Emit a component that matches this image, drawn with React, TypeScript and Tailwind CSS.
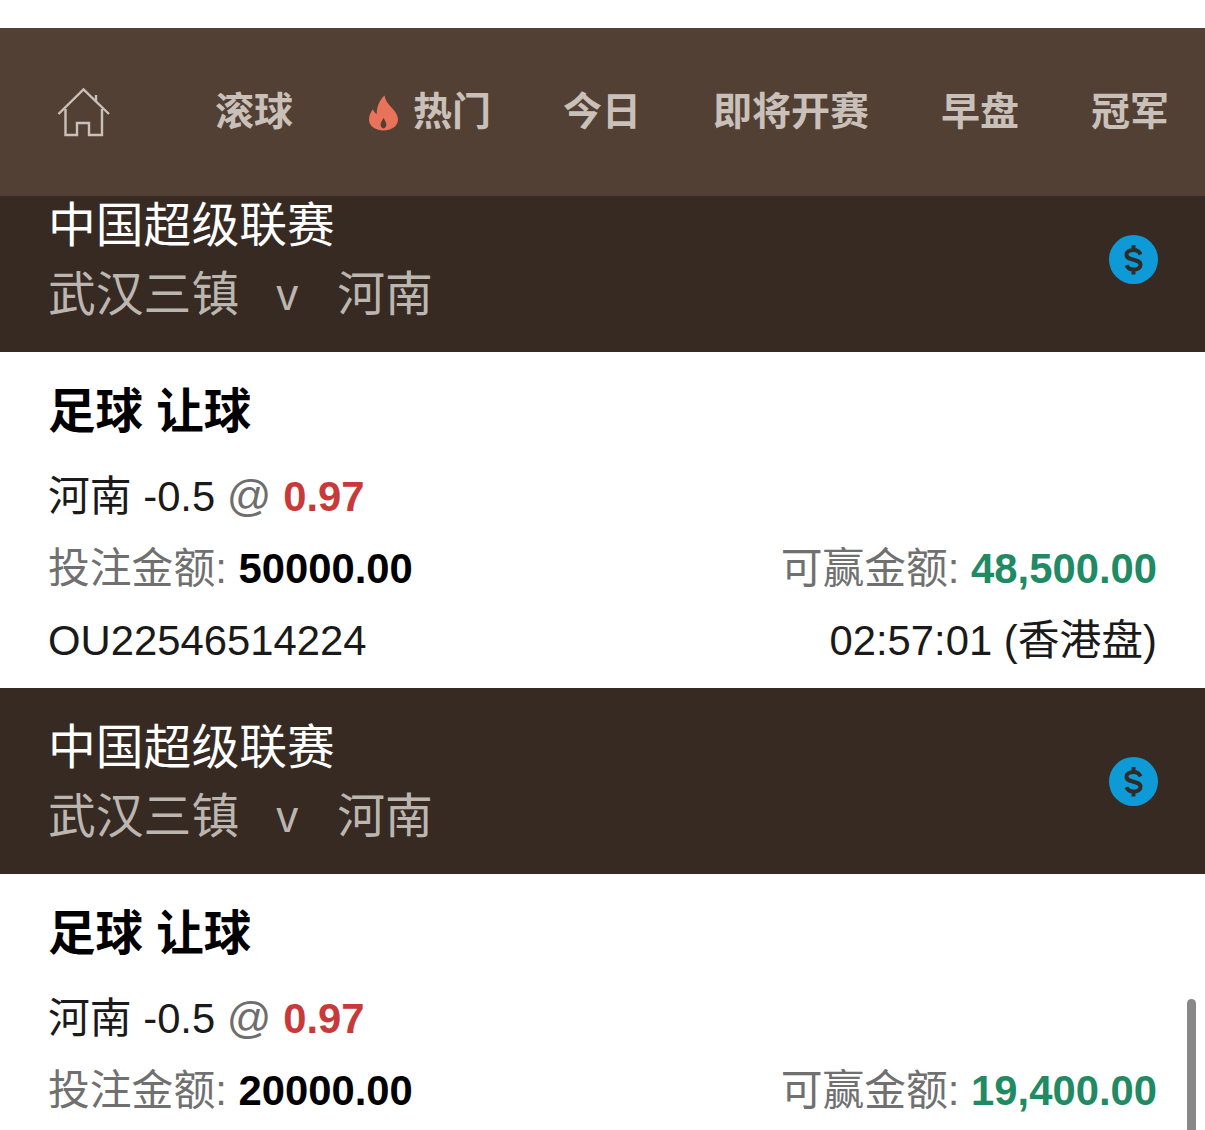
import { Fragment } from 'react'

const FONT = 'font-["Liberation_Sans","Noto_Sans_CJK_SC",sans-serif]'

const bets: { stake: string; win: string; ticket?: string; time?: string }[] = [
  { stake: '50000.00', win: '48,500.00', ticket: 'OU22546514224', time: '02:57:01 (香港盘)' },
  { stake: '20000.00', win: '19,400.00' },
]

function HomeIcon() {
  return (
    <svg width="54" height="50" viewBox="0 0 54 50" fill="none" stroke="#c9c1b9" strokeWidth="2.4" className="shrink-0">
      <path d="M1.5 27 26.5 2.500 52 27" />
      <path d="M39 15V8" />
      <path d="M8.5 22V48H20V36H32V48H45V22" />
    </svg>
  )
}

function FlameIcon() {
  return (
    <svg width="29" height="36" viewBox="0 0 30 36" className="shrink-0">
      <path
        fill="#e8735a"
        fillRule="evenodd"
        d="M16 0c1 5 3 8 7 12 4 4 7 8 7 13 0 6-6 11-15 11S0 31 0 25c0-5 2-8 4-11 1 2 2 4 4 5C8 11 11 5 16 0Zm-1 23c-1 3-3 4-3 7 0 2 1.500 4 3 4s3-2 3-4c0-3-2-4-3-7Z"
      />
    </svg>
  )
}

function DollarBadge() {
  return (
    <svg width="49" height="49" viewBox="0 0 49 49" className="shrink-0">
      <circle cx="24.5" cy="24.5" r="24.5" fill="#0e9ad6" />
      <path
        d="M31.5 19.500c-1-2.500-3.500-4.500-7-4.500-4 0-7 1.800-7 4.800 0 6.500 14 3.400 14 9.900 0 3-3 4.800-7 4.800s-6-1.800-7-4.300M24.500 10v5M24.500 34.500v5"
        fill="none"
        stroke="#2f2c28"
        strokeWidth="4"
      />
    </svg>
  )
}

function NavBar() {
  return (
    <nav className="flex h-[168px] items-center gap-[72px] bg-[#524034] pl-[57px] text-[39px] font-bold text-[#c9c1b9]">
      <div className="mr-[32px] flex">
        <HomeIcon />
      </div>
      <span>滚球</span>
      <span className="flex items-center gap-[15px]">
        <span className="ml-[4px] mt-[2px] flex">
          <FlameIcon />
        </span>
        热门
      </span>
      <span>今日</span>
      <span>即将开赛</span>
      <span>早盘</span>
      <span>冠军</span>
    </nav>
  )
}

function BetCard({ stake, win, ticket, time }: (typeof bets)[number]) {
  return (
    <Fragment>
      <div className="flex h-[186px] items-center justify-between bg-[#362a23] pl-[48px] pr-[47px]">
        <div className="pt-[2px]">
          <div className="text-[47.800px] leading-[70px] text-white">中国超级联赛</div>
          <div className="flex text-[47.800px] leading-[68px] text-[#bcb6b0]">
            <span>武汉三镇</span>
            <span className="ml-[37px] text-[44px]">v</span>
            <span className="ml-[39px]">河南</span>
          </div>
        </div>
        <DollarBadge />
      </div>
      <div className="bg-white px-[48px] pb-[11px] pt-[30px]">
        <div className="mb-[19px] text-[47.500px] font-bold leading-[60px] text-black">足球 让球</div>
        <div className="text-[41.800px] leading-[72px] text-[#1a1a1a]">
          河南 -0.5 <span className="text-[44px] leading-none text-[#6e6e6e]">@</span>{' '}
          <span className="font-bold text-[#c83a3a]">0.97</span>
        </div>
        <div className="flex justify-between text-[41.800px] leading-[72px] text-[#707070]">
          <span>
            投注金额: <span className="font-bold text-black">{stake}</span>
          </span>
          <span>
            可赢金额: <span className="font-bold text-[#1f8a63]">{win}</span>
          </span>
        </div>
        {ticket && (
          <div className="flex justify-between text-[41.800px] leading-[72px] text-[#1a1a1a]">
            <span>{ticket}</span>
            <span>{time}</span>
          </div>
        )}
      </div>
    </Fragment>
  )
}

export default function App() {
  return (
    <div className={`relative h-[1130px] w-[1205px] overflow-hidden bg-white pt-[28px] ${FONT}`}>
      <NavBar />
      <div className="h-[934px] overflow-hidden">
        <div className="-mt-[30px]">
          {bets.map((bet) => (
            <BetCard key={bet.stake} {...bet} />
          ))}
        </div>
      </div>
      {/* scrollbar thumb */}
      <div className="absolute right-[9px] top-[999px] h-[140px] w-[9px] rounded-full bg-[#888]" />
    </div>
  )
}
